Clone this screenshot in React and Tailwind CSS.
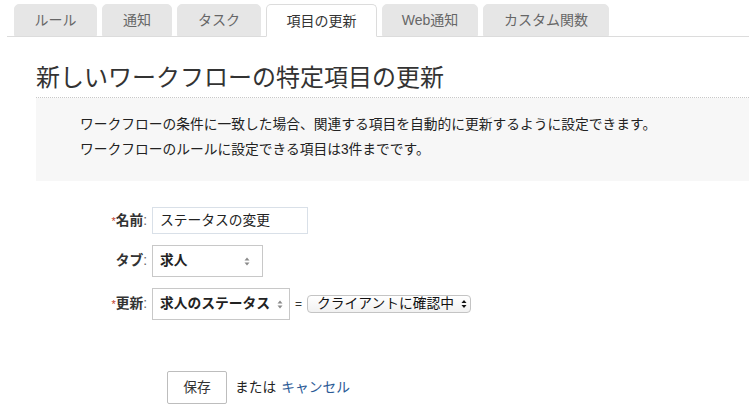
import React from "react";

function Arrows({ color = "#8a8a8a", w = 6, h = 9 }) {
  return (
    <svg width={w} height={h} viewBox="0 0 6 9" className="shrink-0">
      <path d="M3 0.5 L5.5 3.5 L0.5 3.5 Z" fill={color} />
      <path d="M3 8.5 L5.5 5.5 L0.5 5.5 Z" fill={color} />
    </svg>
  );
}

const tabs = [
  { t: "ルール", w: "w-[83px]" },
  { t: "通知", w: "w-[70px]" },
  { t: "タスク", w: "w-[84px]" },
  { t: "項目の更新", w: "w-[111px]" },
  { t: "Web通知", w: "w-[96px]" },
  { t: "カスタム関数", w: "w-[126px]" },
];

export default function App() {
  return (
    <div className="w-[749px] h-[419px] overflow-hidden bg-white text-[#333] font-['Liberation_Sans','Noto_Sans_CJK_JP',sans-serif]">
      {/* Tabs */}
      <div className="pt-[4px] pl-[7px]">
        <div className="flex gap-[5px] pl-[7px] border-b border-[#dcdcdc] h-[33px]">
          {tabs.map(({ t, w }, i) =>
            i === 3 ? (
              <div
                key={t}
                className={`${w} h-[33px] flex items-center justify-center bg-white border border-[#dcdcdc] border-b-white rounded-t-[5px] text-[14px] text-[#333] leading-none`}
              >
                {t}
              </div>
            ) : (
              <div
                key={t}
                className={`${w} h-[32px] flex items-center justify-center bg-[#e6e6e6] border border-[#e6e6e6] rounded-t-[5px] text-[14px] text-[#666] leading-none`}
              >
                {t}
              </div>
            )
          )}
        </div>
      </div>

      {/* Content */}
      <div className="pl-[36px]">
        <h1 className="pt-[25px] pb-[4px] text-[24px] leading-[31px] font-normal text-[#333] border-b border-dotted border-[#c8c8c8]">
          新しいワークフローの特定項目の更新
        </h1>
        <div className="bg-[#f7f7f7] pl-[44px] pt-[14px] pb-[19px] text-[13.75px] leading-[25px] text-[#222]">
          <p>ワークフローの条件に一致した場合、関連する項目を自動的に更新するように設定できます。</p>
          <p>ワークフローのルールに設定できる項目は3件までです。</p>
        </div>
      </div>

      {/* Form */}
      <div className="pt-[26px] flex flex-col gap-[11px] text-[13.75px]">
        <div className="flex items-center gap-[5px]">
          <div className="w-[147px] text-right font-bold leading-none">
            <span className="text-[#c0392b] text-[11px] font-normal">*</span>名前<span className="font-normal text-[#666]">:</span>
          </div>
          <div className="w-[156px] h-[27px] border border-[#d9e0e8] flex items-center pl-[7px] leading-none text-[#222]">
            ステータスの変更
          </div>
        </div>

        <div className="flex items-center gap-[5px]">
          <div className="w-[147px] text-right font-bold leading-none">
            タブ<span className="font-normal text-[#666]">:</span>
          </div>
          <div className="w-[111px] h-[32px] border border-[#c8c8c8] flex items-center justify-between pl-[7px] pr-[12px] leading-none font-bold text-[#222]">
            <span>求人</span>
            <Arrows />
          </div>
        </div>

        <div className="flex items-center gap-[5px]">
          <div className="w-[147px] text-right font-bold leading-none">
            <span className="text-[#c0392b] text-[11px] font-normal">*</span>更新<span className="font-normal text-[#666]">:</span>
          </div>
          <div className="w-[138px] h-[32px] border border-[#c8c8c8] flex items-center justify-between pl-[7px] pr-[6px] leading-none font-bold text-[#222]">
            <span>求人のステータス</span>
            <Arrows />
          </div>
          <span className="text-[12px] leading-none text-[#333]">=</span>
          <div className="w-[164px] h-[18px] border border-[#c4c4c4] rounded-[4px] bg-gradient-to-b from-white to-[#f1f1f1] flex items-center justify-between pl-[9px] pr-[3px] leading-none text-[#111]">
            <span>クライアントに確認中</span>
            <Arrows color="#111" w={6} h={10} />
          </div>
        </div>
      </div>

      {/* Buttons */}
      <div className="pl-[167px] pt-[51px] flex items-center text-[13.75px] leading-none">
        <button className="w-[60px] h-[33px] border border-[#bdbdbd] rounded-[2px] bg-white text-[#333] flex items-center justify-center">
          保存
        </button>
        <span className="ml-[8px] text-[#222]">または</span>
        <a className="ml-[5px] text-[#2b5a96] cursor-pointer">キャンセル</a>
      </div>
    </div>
  );
}
